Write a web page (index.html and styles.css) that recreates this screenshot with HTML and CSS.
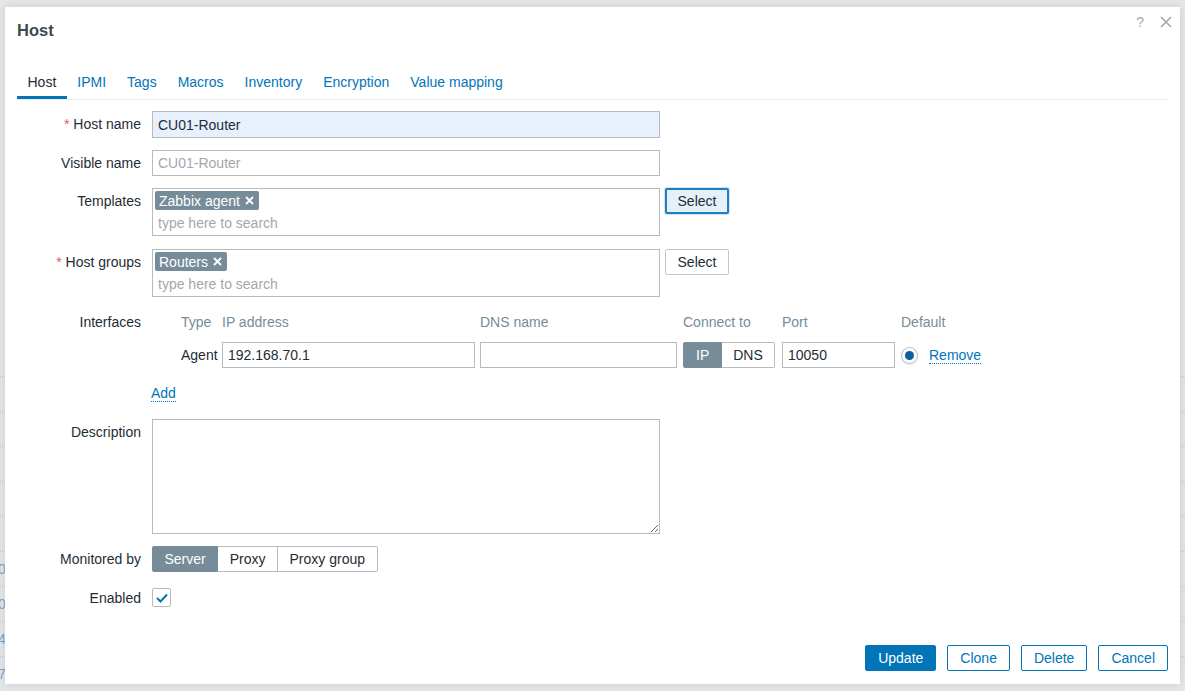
FILE: index.html
```html
<!DOCTYPE html>
<html lang="en">
  <head>
    <meta charset="UTF-8" />
    <meta name="viewport" content="width=device-width, initial-scale=1.0" />
    <title>Host</title>
    <link rel="stylesheet" href="styles.css">
  </head>
  <body>
    <!-- Page behind the dialog (mostly hidden) -->
    <div class="page">
      <div class="page-row"></div>
      <div class="page-row"></div>
      <div class="page-row"></div>
      <div class="page-row"></div>
      <div class="page-row"></div>
      <div class="page-row"></div>
      <div class="page-row"><span class="page-num">0</span></div>
      <div class="page-row"><span class="page-num">0</span></div>
      <div class="page-row"><span class="page-num">4</span></div>
      <div class="page-row"><span class="page-num">7</span></div>
    </div>

    <div class="dialog">
      <div class="dialog-head">
        <h4>Host</h4>
        <div class="head-icons">
          <span class="help-btn">?</span>
          <svg class="close-btn" width="12" height="12" viewBox="0 0 12 12">
            <path d="M1 1L11 11M11 1L1 11" stroke="#a3a6a8" stroke-width="1.6" fill="none" />
          </svg>
        </div>
      </div>

      <div class="dialog-body">
        <ul class="tabs">
          <li class="tab active">Host</li>
          <li class="tab">IPMI</li>
          <li class="tab">Tags</li>
          <li class="tab">Macros</li>
          <li class="tab">Inventory</li>
          <li class="tab">Encryption</li>
          <li class="tab">Value mapping</li>
        </ul>

        <div class="form">
          <div class="form-row row-hostname">
            <label class="form-label tall"><span class="req">*</span> Host name</label>
            <div class="form-field">
              <input class="text-input autofill" type="text" value="CU01-Router" />
            </div>
          </div>

          <div class="form-row">
            <label class="form-label">Visible name</label>
            <div class="form-field">
              <input class="text-input" type="text" placeholder="CU01-Router" />
            </div>
          </div>

          <div class="form-row row-templates">
            <label class="form-label">Templates</label>
            <div class="form-field with-btn">
              <div class="multiselect">
                <div class="ms-tags">
                  <span class="tag">Zabbix agent
                    <svg width="9" height="9" viewBox="0 0 9 9"><path d="M1 1L8 8M8 1L1 8" stroke="#fff" stroke-width="1.8" /></svg>
                  </span>
                </div>
                <div class="ms-search">type here to search</div>
              </div>
              <button class="btn-alt focused">Select</button>
            </div>
          </div>

          <div class="form-row row-groups">
            <label class="form-label"><span class="req">*</span> Host groups</label>
            <div class="form-field with-btn">
              <div class="multiselect">
                <div class="ms-tags">
                  <span class="tag">Routers
                    <svg width="9" height="9" viewBox="0 0 9 9"><path d="M1 1L8 8M8 1L1 8" stroke="#fff" stroke-width="1.8" /></svg>
                  </span>
                </div>
                <div class="ms-search">type here to search</div>
              </div>
              <button class="btn-alt">Select</button>
            </div>
          </div>

          <div class="form-row row-interfaces">
            <label class="form-label short">Interfaces</label>
            <div class="form-field">
              <div class="iface-grid">
                <span></span>
                <span class="iface-head">Type</span>
                <span class="iface-head">IP address</span>
                <span class="iface-head">DNS name</span>
                <span class="iface-head">Connect to</span>
                <span class="iface-head">Port</span>
                <span class="iface-head">Default</span>

                <span></span>
                <span class="iface-type">Agent</span>
                <input class="text-input ip-input" type="text" value="192.168.70.1" />
                <input class="text-input dns-input" type="text" value="" />
                <div class="seg seg-connect">
                  <span class="seg-item on">IP</span>
                  <span class="seg-item">DNS</span>
                </div>
                <input class="text-input port-input" type="text" value="10050" />
                <div class="iface-default">
                  <span class="radio"><span class="radio-dot"></span></span>
                  <a class="link">Remove</a>
                </div>
              </div>
              <a class="link add-link">Add</a>
            </div>
          </div>

          <div class="form-row row-description">
            <label class="form-label">Description</label>
            <div class="form-field">
              <textarea class="textarea"></textarea>
            </div>
          </div>

          <div class="form-row row-monitored">
            <label class="form-label">Monitored by</label>
            <div class="form-field">
              <div class="seg seg-monitor">
                <span class="seg-item on">Server</span>
                <span class="seg-item">Proxy</span>
                <span class="seg-item">Proxy group</span>
              </div>
            </div>
          </div>

          <div class="form-row">
            <label class="form-label check-label">Enabled</label>
            <div class="form-field">
              <span class="checkbox">
                <svg width="12" height="10" viewBox="0 0 12 10"><path d="M1 5L4.5 8.5L11 1.5" stroke="#0275b8" stroke-width="2" fill="none" /></svg>
              </span>
            </div>
          </div>
        </div>
      </div>

      <div class="dialog-foot">
        <button class="btn-main">Update</button>
        <button class="btn-outline">Clone</button>
        <button class="btn-outline">Delete</button>
        <button class="btn-outline">Cancel</button>
      </div>
    </div>
  </body>
</html>
```

FILE: styles.css
```css
body {
  margin: 0;
  font-family: "Liberation Sans", Arial, sans-serif;
  font-size: 14px;
  color: #1f2c33;
  background-color: #e6e7e8;
  height: 691px;
  overflow: hidden;
}

/* Page behind the overlay */
.page {
  padding-top: 342px;
}

.page-row {
  height: 34px;
  border-bottom: 1px solid #d9dbdc;
  line-height: 34px;
}

.page-num {
  display: block;
  margin-left: -2px;
  color: #7ba7cc;
  font-size: 14px;
}

/* Dialog */
.dialog {
  position: absolute;
  left: 5px;
  top: 7px;
  width: 1175px;
  height: 677px;
  background-color: #fff;
  box-shadow: 0 0 10px rgba(0, 0, 0, 0.12);
  display: flex;
  flex-direction: column;
}

.dialog-head {
  display: flex;
  justify-content: space-between;
  padding: 14px 8px 0 12px;
}

.dialog-head h4 {
  margin: 0;
  font-size: 16.5px;
  line-height: 18px;
  font-weight: bold;
  color: #3b4a52;
}

.head-icons {
  display: flex;
  align-items: center;
  gap: 16px;
  margin-top: -17px;
}

.help-btn {
  color: #a9acae;
  font-size: 14px;
}

.dialog-body {
  flex: 1;
  padding: 0 12px;
}

.tabs {
  list-style: none;
  margin: 27px 0 0 0;
  padding: 0;
  display: flex;
  border-bottom: 1px solid #ebeef0;
}

.tab {
  padding: 7px 10.5px 5px;
  line-height: 18px;
  color: #0275b8;
  border-bottom: 3px solid transparent;
}

.tab.active {
  color: #1f2c33;
  border-bottom-color: #0275b8;
}

.form {
  margin-top: 11px;
}

.form-row {
  display: flex;
  gap: 11px;
  margin-bottom: 12px;
}

.form-label {
  width: 124px;
  flex: none;
  text-align: right;
  line-height: 26px;
}

.form-label.tall {
  line-height: 27px;
}

.form-label.short {
  line-height: 20px;
}

.form-label.check-label {
  line-height: 20px;
}

.req {
  color: #e45959;
}

.form-field.with-btn {
  display: flex;
  gap: 5px;
  align-items: flex-start;
}

.text-input {
  box-sizing: border-box;
  width: 508px;
  height: 26px;
  border: 1px solid #b7bbbe;
  padding: 0 5px;
  font-family: inherit;
  font-size: 14px;
  color: #1f2c33;
  background-color: #fff;
  outline: none;
  margin: 0;
}

.text-input::placeholder {
  color: #a3a8ab;
}

.text-input.autofill {
  height: 27px;
  background-color: #e8f0fe;
}

.row-templates {
  margin-bottom: 13px;
}

.row-groups {
  margin-bottom: 15px;
}

.multiselect {
  box-sizing: border-box;
  width: 508px;
  height: 48px;
  border: 1px solid #b7bbbe;
  padding: 2px;
}

.ms-tags {
  display: flex;
  height: 19px;
}

.tag {
  display: inline-flex;
  align-items: center;
  gap: 5px;
  height: 19px;
  padding: 0 5px 0 4px;
  background-color: #768d99;
  color: #fff;
  border-radius: 2px;
}

.ms-search {
  margin-top: 3px;
  line-height: 20px;
  padding-left: 3px;
  color: #a3a8ab;
}

.btn-alt {
  box-sizing: border-box;
  width: 64px;
  height: 26px;
  border: 1px solid #c4c8cb;
  border-radius: 2px;
  background-color: #fff;
  color: #1f2c33;
  font-family: inherit;
  font-size: 14px;
  padding: 0;
}

.btn-alt.focused {
  border: 2px solid #1f7fc0;
  background-color: #e5f0f9;
  box-shadow: 0 0 0 1px #cfe3f3;
}

/* Interfaces */
.row-interfaces {
  margin-bottom: 17px;
}

.iface-grid {
  display: grid;
  grid-template-columns: 29px 41px 258px 203px 99px 119px auto;
  grid-template-rows: 20px 26px;
  row-gap: 10px;
  align-items: center;
}

.iface-head {
  color: #768d99;
  line-height: 20px;
}

.ip-input {
  width: 253px;
}

.dns-input {
  width: 197px;
}

.port-input {
  width: 113px;
}

.iface-default {
  display: flex;
  align-items: center;
  gap: 11px;
}

.radio {
  box-sizing: border-box;
  width: 17px;
  height: 17px;
  border: 1px solid #b7bbbe;
  border-radius: 50%;
  display: flex;
  align-items: center;
  justify-content: center;
  box-shadow: 0 1px 2px rgba(0, 0, 0, 0.1);
}

.radio-dot {
  width: 9px;
  height: 9px;
  border-radius: 50%;
  background-color: #0b5f9a;
}

.link {
  color: #0275b8;
  border-bottom: 1px dotted #0275b8;
  line-height: 16px;
}

.add-link {
  display: inline-block;
  margin-top: 17px;
  margin-left: -1px;
}

/* Segmented controls */
.seg {
  display: flex;
  height: 26px;
  width: max-content;
}

.seg-item {
  box-sizing: border-box;
  height: 26px;
  line-height: 24px;
  padding: 0 11px;
  border: 1px solid #b7bbbe;
  border-left: none;
  color: #1f2c33;
  background-color: #fff;
}

.seg-item:first-child {
  border-left: 1px solid #b7bbbe;
  border-radius: 2px 0 0 2px;
}

.seg-item:last-child {
  border-radius: 0 2px 2px 0;
}

.seg-item.on {
  background-color: #768d99;
  border-color: #768d99;
  color: #fff;
}

.seg-connect .seg-item.on {
  padding: 0 12px;
}

.seg-monitor .seg-item {
  padding: 0 11.5px;
}

.textarea {
  box-sizing: border-box;
  display: block;
  width: 508px;
  height: 115px;
  border: 1px solid #b7bbbe;
  margin: 0;
  resize: vertical;
  font-family: inherit;
  font-size: 14px;
  outline: none;
}

.row-monitored {
  margin-bottom: 16px;
}

.checkbox {
  box-sizing: border-box;
  display: flex;
  align-items: center;
  justify-content: center;
  width: 19px;
  height: 19px;
  border: 1px solid #b7bbbe;
  border-radius: 2px;
  background-color: #fff;
}

/* Footer */
.dialog-foot {
  display: flex;
  justify-content: flex-end;
  gap: 11px;
  padding: 0 12px 13px;
}

.btn-main,
.btn-outline {
  height: 26px;
  padding: 0 12px;
  border-radius: 2px;
  font-family: inherit;
  font-size: 14px;
}

.btn-main {
  background-color: #0275b8;
  border: 1px solid #0275b8;
  color: #fff;
}

.btn-outline {
  background-color: #fff;
  border: 1px solid #0275b8;
  color: #0275b8;
}
```
